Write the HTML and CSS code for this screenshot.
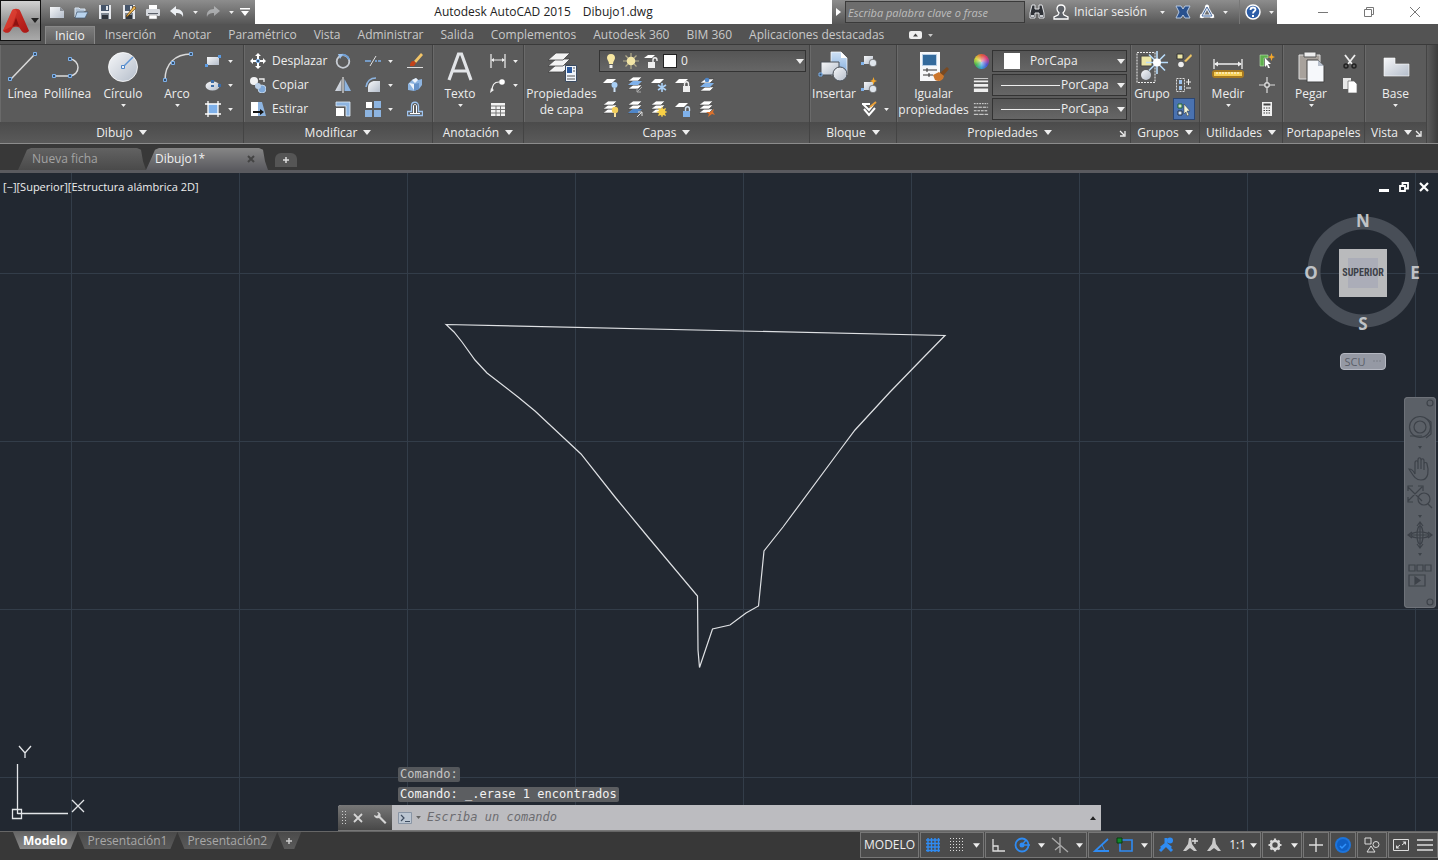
FILE: index.html
```html
<!DOCTYPE html>
<html lang="es">
<head>
<meta charset="utf-8">
<title>Autodesk AutoCAD 2015 - Dibujo1.dwg</title>
<link rel="stylesheet" href="styles.css">
</head>
<body>
<svg class="defs" aria-hidden="true">
  <defs>
    <linearGradient id="gMetal" x1="0" y1="0" x2="1" y2="1"><stop offset="0" stop-color="#f6f7f9"/><stop offset="1" stop-color="#b4bdca"/></linearGradient>
    <linearGradient id="gBlue" x1="0" y1="0" x2="0" y2="1"><stop offset="0" stop-color="#cfe2f6"/><stop offset="1" stop-color="#7ea9da"/></linearGradient>
    <linearGradient id="gRed" x1="0" y1="0" x2="1" y2="1"><stop offset="0" stop-color="#d9382c"/><stop offset="1" stop-color="#a81614"/></linearGradient>
  </defs>
  <symbol id="caret" viewBox="0 0 8 5"><path d="M0 0h8L4 5z" fill="currentColor"/></symbol>
  <symbol id="launch" viewBox="0 0 8 8"><path d="M2 2l4 4M7 2v5H2" stroke="#eee" stroke-width="1.300" fill="none"/></symbol>
  <symbol id="logo" viewBox="0 0 24 24"><path d="M0 21L8 3c1-3 7-3 8 0l8 18c-2 3-6 2-7 0l-2-3c-2-1-4-1-6 0l-2 3c-1 2-5 3-7 0z" fill="url(#gRed)"/><path d="M12 9l-3 8c2-1 4-1 6 0z" fill="#8d1211"/><path d="M8 3c1-3 4-2 5 1L8 17 0 21z" fill="#ee5341" opacity=".4"/></symbol>

  <symbol id="new" viewBox="0 0 16 16"><path d="M1 3h10l4 4v7H1z" fill="url(#gMetal)"/><path d="M11 3v4h4z" fill="#8b9098"/></symbol>
  <symbol id="open" viewBox="0 0 16 16"><path d="M2 13V4h4l1 1h5v2" fill="#aebfd2" stroke="#dbe6f1"/><path d="M4 8h11l-3 6H2z" fill="#b9d3ed" stroke="#42566d" stroke-width=".7"/></symbol>
  <symbol id="save" viewBox="0 0 16 16"><path d="M2 1h12v14H2z" fill="#e7e9ed"/><path d="M4 1h8v6H4z" fill="#46556a"/><path d="M9 2h2v4H9z" fill="#dfe4ea"/><path d="M4 9h8v6H4z" fill="#7f8893"/><path d="M5 11h6v4H5z" fill="#30353c"/></symbol>
  <symbol id="pencil" viewBox="0 0 16 16"><path d="M6 11l7-9 2 2-8 8-2 1z" fill="#eab34f" stroke="#6a4516" stroke-width=".7"/></symbol>
  <symbol id="print" viewBox="0 0 16 16"><path d="M4 1h8v5H4z" fill="#fff"/><rect x="1" y="5" width="14" height="7" rx="1" fill="#d6d9de"/><path d="M3 9h10v1H3z" fill="#5b6069"/><path d="M4 11h8v4H4z" fill="#fff" stroke="#777" stroke-width=".5"/></symbol>
  <symbol id="undo" viewBox="0 0 16 16"><path d="M1 7l6-5v3c5 0 8 3 7 8-1-3-3-4-7-4v3z" fill="#eceff3"/></symbol>
  <symbol id="bar-caret" viewBox="0 0 10 8"><path d="M0 0h10v1.500H0zM1 3h8L5 8z" fill="#fff"/></symbol>
  <symbol id="binoc" viewBox="0 0 16 16"><path d="M3 1h3v4h4V1h3l2 8v5h-5V9H6v5H1V9z" fill="#2e3136" stroke="#e3e5e8"/><path d="M2 11h3v2H2zM11 11h3v2h-3z" fill="#c9ccd0"/></symbol>
  <symbol id="user" viewBox="0 0 16 16"><path d="M8 1c3 0 4 2 4 4s-1 3-2 4l1 2 4 2v2H1v-2l4-2 1-2C5 8 4 7 4 5s1-4 4-4z" fill="#5d6167" stroke="#fff" stroke-width="1.300"/></symbol>
  <symbol id="xchg" viewBox="0 0 16 16"><path d="M1 2h5l2 3 2-3h5l-3 6 3 6h-5l-2-3-2 3H1l3-6z" fill="#29518e" stroke="#b5c7df"/></symbol>
  <symbol id="a360" viewBox="0 0 16 16"><path d="M8 3l5 9H3z" fill="none" stroke="#e1e8f1" stroke-width="3"/><circle cx="8" cy="3" r="2.200" fill="#fff"/><circle cx="3" cy="12" r="2.200" fill="#fff"/><circle cx="13" cy="12" r="2.200" fill="#fff"/><path d="M8 3l5 9H3z" fill="none" stroke="#4b6ca0"/></symbol>
  <symbol id="help" viewBox="0 0 16 16"><circle cx="8" cy="8" r="7" fill="#2d5ea8" stroke="#fff" stroke-width="1.500"/><path d="M5.500 6c0-3.500 5-3 5-.5 0 2-2.500 1.500-2.500 4" fill="none" stroke="#fff" stroke-width="1.800"/><path d="M7 11h2v2H7z" fill="#fff"/></symbol>

  <symbol id="line" viewBox="0 0 32 32"><path d="M4 28L28 3" stroke="#dadada" stroke-width="1.500"/><g fill="#33506f" stroke="#7fb1ea"><path d="M1.500 26.500h3v3h-3zM26.500 1.500h3v3h-3z"/></g></symbol>
  <symbol id="pline" viewBox="0 0 32 32"><path d="M2 25h15c12 0 12-17 0-17" fill="none" stroke="#dadada" stroke-width="1.500"/><g fill="#33506f" stroke="#7fb1ea"><path d="M.5 23.500h3v3h-3zM16.500 23.500h3v3h-3zM16.500 6.500h3v3h-3z"/></g></symbol>
  <symbol id="circle" viewBox="0 0 32 32"><circle cx="16" cy="16" r="14.500" fill="url(#gMetal)" stroke="#fff" stroke-width=".8"/><path d="M17 15L26 6" stroke="#5d93d3" stroke-width="1.500"/><path d="M14.500 14.500h3v3h-3z" fill="#eaf2fa" stroke="#4f86c8"/></symbol>
  <symbol id="arc" viewBox="0 0 32 32"><path d="M4 29C4 13 14 3 30 3" fill="none" stroke="#dadada" stroke-width="1.500"/><g fill="#33506f" stroke="#7fb1ea"><path d="M2.500 27.500h3v3h-3zM10.500 10.500h3v3h-3zM28.500 1.500h3v3h-3z"/></g></symbol>
  <symbol id="rect" viewBox="0 0 16 16"><path d="M2 4h12v8H2z" fill="url(#gMetal)"/><path d="M13 2h3v3h-3zM0 11h3v3H0z" fill="#5b9be3"/></symbol>
  <symbol id="ellipse" viewBox="0 0 16 16"><ellipse cx="7.500" cy="9" rx="7" ry="4.500" fill="url(#gMetal)"/><path d="M6 3h3v3H6zM6 8h3v2H6zM13 7h3v3h-3z" fill="#3c6da8"/></symbol>
  <symbol id="hatch" viewBox="0 0 16 16"><path d="M3 3h10v10H3z" fill="#7fb1ea"/><path d="M3 0v16M13 0v16M0 3h16M0 13h16" stroke="#fff" stroke-width="1.300"/></symbol>

  <symbol id="move" viewBox="0 0 16 16"><path d="M8 0l3 3H9v3H7V3H5zM8 16l3-3H9v-3H7v3H5zM0 8l3-3v2h3v2H3v2zM16 8l-3-3v2h-3v2h3v2z" fill="#fff"/><path d="M6.500 6.500h3v3h-3z" fill="#33506f" stroke="#8fbdf0"/></symbol>
  <symbol id="copy" viewBox="0 0 16 16"><circle cx="4" cy="4" r="4" fill="#f1f2f4"/><circle cx="12" cy="12" r="4" fill="#7fa9da" stroke="#dce9f7" stroke-width=".7"/><circle cx="8" cy="9" r="3" fill="#b9cee6"/><path d="M9 2h5v3" fill="none" stroke="#eee" stroke-width="1.300"/></symbol>
  <symbol id="stretch" viewBox="0 0 16 16"><path d="M1 1h8v14H1z" fill="#fff"/><path d="M8 1h4l4 14H8z" fill="#8db4e0"/><path d="M3 10h7V8l4 3-4 3v-2H3z" fill="#151515"/></symbol>
  <symbol id="rotate" viewBox="0 0 16 16"><circle cx="8" cy="8.500" r="6.300" fill="none" stroke="#c7ccd3" stroke-width="1.800"/><path d="M5 2.500a6.500 6.500 0 0 1 9 4" fill="none" stroke="#6f9fd6" stroke-width="2"/><path d="M3 1l5 0-3 5z" fill="#9ec3ee"/></symbol>
  <symbol id="mirror" viewBox="0 0 16 16"><path d="M6.500 2v12H0z" fill="url(#gMetal)"/><path d="M9.500 2v12H16z" fill="#8db4e0"/><path d="M8 0v16" stroke="#fff"/></symbol>
  <symbol id="scale" viewBox="0 0 16 16"><path d="M1 1h14v14h-4V5H1z" fill="#8db4e0" stroke="#e2edf9" stroke-width=".8"/><path d="M1 7h8v8H1z" fill="#fff"/></symbol>
  <symbol id="trim" viewBox="0 0 16 16"><path d="M0 8h6M10 8h2M13 8h3" stroke="#7fb1ea" stroke-width="1.500"/><path d="M5 13L11 3" stroke="#e2e2e2"/></symbol>
  <symbol id="fillet" viewBox="0 0 16 16"><path d="M3 15V11C3 6 6 4 10 4h5v11z" fill="url(#gMetal)"/><path d="M1 10C2 4 5 1 11 1" fill="none" stroke="#8db4e0" stroke-width="1.500"/></symbol>
  <symbol id="array" viewBox="0 0 16 16"><path d="M1 1h6v6H1z" fill="#fff"/><path d="M9 0h7v7H9zM0 9h7v7H0zM9 9h7v7H9z" fill="#8db4e0"/></symbol>
  <symbol id="erase" viewBox="0 0 16 16"><path d="M0 14.500h16" stroke="#ddd"/><path d="M7 8l7-8 2 2-7 8z" fill="#f3c568"/><path d="M7 8l2 2-2 3H3c0-3 1-5 4-5z" fill="#c2431a"/></symbol>
  <symbol id="explode" viewBox="0 0 16 16"><path d="M5 3l4-2 2 2 4-1v6l-3 4-5 2-6-1V7z" fill="#8db4e0"/><path d="M5 3l4-2 2 2-3 3zM2 6l5 1v6" fill="#eef4fb"/><path d="M7 7l5-1v6l-5 2z" fill="#6692c8"/></symbol>
  <symbol id="offset" viewBox="0 0 16 16"><path d="M.5 14.500h15v-4h-4V5c0-5-7-5-7 0v5.500h-4z" fill="none" stroke="#9ec3ee" stroke-width="1.300"/><path d="M3 12.500h10M6.500 12V5c0-2 3-2 3 0v7" fill="none" stroke="#fff"/></symbol>

  <symbol id="text-a" viewBox="0 0 32 32"><path d="M5 29L14.500 3h3L27 29M8 20h16" fill="none" stroke="#e2e4e7" stroke-width="3.200"/></symbol>
  <symbol id="dim" viewBox="0 0 16 16"><path d="M1 1v14M15 1v14M2 7h12" stroke="#eee" stroke-width="1.200" fill="none"/><path d="M1 7l3-2v4zM15 7l-3-2v4z" fill="#eee"/></symbol>
  <symbol id="leader" viewBox="0 0 16 16"><path d="M2 14c0-6 2-9 7-9" fill="none" stroke="#eee" stroke-width="1.200"/><path d="M0 16l1-5 3 2z" fill="#eee"/><circle cx="12" cy="5" r="2.800" fill="#fff"/></symbol>
  <symbol id="table" viewBox="0 0 16 16"><path d="M1 2h14v13H1z" fill="#f2f2f2"/><path d="M1 5h14M1 8.500h14M1 12h14M6 5v10M10.500 5v10" stroke="#777"/></symbol>

  <symbol id="stack" viewBox="0 0 16 16"><g fill="#fff" stroke="#444" stroke-width=".6"><path d="M1 14l5-4h9l-4 4z"/><path d="M1 10l5-4h9l-4 4z"/><path d="M1 6l5-4h9l-4 4z"/></g></symbol>
  <symbol id="sheet" viewBox="0 0 16 16"><path d="M0 6l4-4h9L9 6z" fill="#fff"/></symbol>
  <symbol id="layerprops" viewBox="0 0 32 32"><g fill="#f4f4f4" stroke="#444" stroke-width=".8"><path d="M2 21l8-7h14l-7 7z"/><path d="M2 15l8-7h14l-7 7z"/><path d="M2 9l8-7h14l-7 7z"/></g><path d="M19.500 14.500h11v16h-11z" fill="#f0f5fb" stroke="#3a4a60"/><path d="M21 16h5v6h-5z" fill="#2c5a9e"/><path d="M27 17h2M27 20h2M21 25h8M21 28h8" stroke="#555"/></symbol>
  <symbol id="l-off" viewBox="0 0 16 16"><use href="#sheet"/><circle cx="11.500" cy="8" r="3" fill="#a9cff5"/><path d="M11.500 11v4" stroke="#cfe2f6" stroke-width="2"/></symbol>
  <symbol id="l-on" viewBox="0 0 16 16"><use href="#stack" width="16" height="16" x="-1" y="-2"/><circle cx="12" cy="9" r="3.200" fill="#f4cf5b"/><path d="M12 12v4" stroke="#f7e09a" stroke-width="2"/></symbol>
  <symbol id="l-iso" viewBox="0 0 16 16"><use href="#stack" width="16" height="16" y="-2"/><path d="M1 8l5-4h9l-4 4z" fill="#7fb1ea"/><path d="M15 10l-5 5M10 11v4h4" stroke="#aaa" fill="none"/></symbol>
  <symbol id="l-uniso" viewBox="0 0 16 16"><use href="#stack" width="16" height="16" y="-2"/><path d="M1 12l5-4h9l-4 4z" fill="#4f86c8"/><path d="M10 16l5-5M11 11h4v4" stroke="#ddd" fill="none"/></symbol>
  <symbol id="l-frz" viewBox="0 0 16 16"><use href="#sheet"/><path d="M11 6v9M7 8l8 5M15 8l-8 5" stroke="#a9cff5" stroke-width="1.600"/></symbol>
  <symbol id="l-thaw" viewBox="0 0 16 16"><use href="#stack" width="16" height="16" x="-1" y="-2"/><path d="M11 5l1 3 3-1-1 3 3 1-3 1 1 3-3-1-1 3-1-3-3 1 1-3-3-1 3-1-1-3 3 1z" fill="#f8cf45"/></symbol>
  <symbol id="l-lock" viewBox="0 0 16 16"><use href="#sheet"/><path d="M8 9h7v6H8z" fill="#eee"/><path d="M9.500 9V7c0-3 4-3 4 0v2" fill="none" stroke="#eee" stroke-width="1.400"/></symbol>
  <symbol id="l-unlock" viewBox="0 0 16 16"><use href="#sheet"/><path d="M8 10h7v6H8z" fill="#7fb1ea"/><path d="M10.500 10V8c0-3 4-3 4 0v2" fill="none" stroke="#cde" stroke-width="1.400"/></symbol>
  <symbol id="l-cur" viewBox="0 0 16 16"><use href="#stack" width="16" height="16"/><path d="M1 10l5-4h9l-4 4z" fill="#7fb1ea"/><circle cx="8" cy="3" r="2.300" fill="#4f86c8"/></symbol>
  <symbol id="l-del" viewBox="0 0 16 16"><use href="#stack" width="16" height="16" x="-1" y="-2"/><path d="M15 8l-4 3-4 0 3 2-1 3 4-3 3 1-2-3z" fill="#d9712d"/></symbol>
  <symbol id="bulb" viewBox="0 0 16 16"><path d="M8 1c3 0 4 2 4 4s-2 3-2 6H6c0-3-2-4-2-6s1-4 4-4z" fill="#f7e7a1"/><path d="M6.500 12h3v3h-3z" fill="#eee"/></symbol>
  <symbol id="sun" viewBox="0 0 16 16"><path d="M8 0v16M0 8h16M2.500 2.500l11 11M13.500 2.500l-11 11" stroke="#b4ad8b" stroke-width="1.200"/><circle cx="8" cy="8" r="4.300" fill="#f3e6a6"/></symbol>
  <symbol id="freelock" viewBox="0 0 16 16"><path d="M1 5l4-3h7L9 5z" fill="#fff"/><path d="M5 9h7v6H5z" fill="#eee"/><path d="M10 9V7c0-3 4-3 4 0v1" fill="none" stroke="#eee" stroke-width="1.400"/></symbol>

  <symbol id="insert" viewBox="0 0 32 32"><path d="M13 1h10l6 6v17H13z" fill="url(#gBlue)" stroke="#fff" stroke-width=".7"/><path d="M23 1v6h6" fill="#fff"/><path d="M3 11h18v13H3z" fill="url(#gMetal)" stroke="#4a5058"/><circle cx="22" cy="23" r="7" fill="url(#gMetal)" stroke="#4a5058"/><path d="M1 22h3v3H1z" fill="#33506f" stroke="#7fb1ea"/></symbol>
  <symbol id="mkblock" viewBox="0 0 16 16"><path d="M3 2h9v8H3z" fill="url(#gMetal)"/><circle cx="12" cy="9" r="3.800" fill="#dfe5ec" stroke="#555" stroke-width=".7"/><path d="M0 8h3v3H0z" fill="#7fb1ea"/></symbol>
  <symbol id="star" viewBox="0 0 16 16"><path d="M12.500 0l1 3 2.500 1-2.500 1-1 3-1-3L9 4l2.500-1z" fill="#f6a82a"/></symbol>
  <symbol id="attr" viewBox="0 0 16 16"><path d="M1 3h8M2 3l6 6 4-5M3 8l5 6 6-7" fill="none" stroke="#fff" stroke-width="2"/><path d="M9 6l6-5" stroke="#eaa13a" stroke-width="2"/></symbol>

  <symbol id="match" viewBox="0 0 32 32"><path d="M2 1h20v29H2z" fill="#f6f8fa"/><path d="M4.500 3.500h14v11h-14z" fill="#336a9c" stroke="#b8cfe6"/><path d="M5 19h14M5 24h10M9 17v4M11 22v4" stroke="#333"/><path d="M22 22l7-6 2 2-6 7z" fill="#7a4920"/><path d="M15 24l6-3 5 4c-1 5-5 6-9 4z" fill="#cb762c"/></symbol>
  <symbol id="lweight" viewBox="0 0 18 16"><path d="M1 0h16v1H1zM1 3h16v2H1zM1 7h16v3H1zM1 12h16v4H1z" fill="#eee"/></symbol>
  <symbol id="ltype" viewBox="0 0 18 16"><path d="M1 2h16" stroke="#eee" stroke-dasharray="2 1"/><path d="M1 6h16" stroke="#eee" stroke-dasharray="4 1"/><path d="M1 10h16" stroke="#eee" stroke-dasharray="3 1"/><path d="M1 14h16" stroke="#eee" stroke-dasharray="5 1"/></symbol>

  <symbol id="group" viewBox="0 0 32 32"><path d="M1 1.500h18v30H1z" fill="none" stroke="#eee" stroke-dasharray="2 1"/><path d="M5 5h11v10H5z" fill="#ece6a6" stroke="#444"/><circle cx="10" cy="24" r="5" fill="url(#gMetal)"/><path d="M21 0v23M10 11.500h22M13 3.500l16 16M29 3.500l-16 16" stroke="#b9dcfb" stroke-width="1.600"/><circle cx="21" cy="11.500" r="4" fill="#fff"/></symbol>
  <symbol id="gedit" viewBox="0 0 16 16"><path d="M1 1h6v5H1z" fill="#ece6a6" stroke="#333"/><circle cx="5" cy="11.500" r="2.800" fill="#eee"/><path d="M8 8l7-7 1 2-6 6z" fill="#eec565"/></symbol>
  <symbol id="gadd" viewBox="0 0 16 16"><path d="M.5 1.500h8v13h-8z" fill="none" stroke="#ddd" stroke-dasharray="2 1"/><path d="M3 3h3v4H3zM3 9h3v4H3z" fill="#9ec3ee"/><path d="M10 5h5M12.500 2v6M10 11h5" stroke="#eee"/></symbol>
  <symbol id="gsel" viewBox="0 0 16 16"><path d="M2 3h4v4H2z" fill="#cfe3c4" stroke="#263"/><path d="M2 10h4v4H2z" fill="#dce8f6" stroke="#234"/><path d="M8 3l6 7-3 0 2 4-2 1-1-4-2 2z" fill="#f2f5da" stroke="#333" stroke-width=".5"/></symbol>
  <symbol id="measure" viewBox="0 0 32 32"><path d="M2 8v10M30 8v10M3 13h26" stroke="#eee" stroke-width="1.300"/><path d="M2 13l4-2.500v5zM30 13l-4-2.500v5z" fill="#eee"/><rect x="0" y="19" width="32" height="8" rx="3" fill="#a87a22"/><path d="M2 21h28v4H2z" fill="#f7cf55"/><path d="M5 21v2M8 21v2M11 21v2M14 21v2M17 21v2M20 21v2M23 21v2M26 21v2" stroke="#fff"/></symbol>
  <symbol id="qsel" viewBox="0 0 16 16"><path d="M1 2h8v3H5v8H1z" fill="#5eae4d" stroke="#bfe4b5" stroke-width=".6"/><path d="M6 5l6 6H9l2 4-2 0-1-3-2 2z" fill="#fff"/><path d="M12.500 0l1 3 2.500 1-2.500 1-1 3-1-3L9 4l2.500-1z" fill="#f6a82a"/></symbol>
  <symbol id="point" viewBox="0 0 16 16"><path d="M8 0v16M0 8h16" stroke="#ddd" stroke-width="1.200"/><path d="M6 6h4v4H6z" fill="#555" stroke="#fff"/></symbol>
  <symbol id="calc" viewBox="0 0 16 16"><path d="M3 1h10v14H3z" fill="#f0f0f0"/><path d="M4.500 2.500h7v2h-7z" fill="#444"/><path d="M4.500 7h7M4.500 9.500h7M4.500 12h7" stroke="#444" stroke-dasharray="1.500 1"/></symbol>
  <symbol id="paste" viewBox="0 0 32 32"><path d="M4 4h21v24H4z" fill="#a8a29c" stroke="#ddd"/><path d="M9 1h12v5H9z" fill="#eee" stroke="#555"/><path d="M12 9h11l6 6v16H12z" fill="#f6f8fb" stroke="#444"/><path d="M23 9v6h6z" fill="#b8c0cc"/></symbol>
  <symbol id="cut" viewBox="0 0 16 16"><path d="M3 2l7 9M13 2l-7 9" stroke="#eee" stroke-width="1.800"/><circle cx="4" cy="13" r="2" fill="none" stroke="#222" stroke-width="1.500"/><circle cx="12" cy="13" r="2" fill="none" stroke="#222" stroke-width="1.500"/></symbol>
  <symbol id="dup" viewBox="0 0 16 16"><path d="M1 1h8v11H1z" fill="#e8e8e8"/><path d="M6 4h6l3 3v9H6z" fill="#fff" stroke="#666" stroke-width=".7"/></symbol>
  <symbol id="base" viewBox="0 0 32 32"><path d="M4 7h11v6h14v12H4z" fill="url(#gMetal)" stroke="#fff" stroke-width=".6"/></symbol>
</svg>

<div class="app">
  <header class="top">
    <button class="logo" aria-label="Menú de la aplicación"><svg class="logo-mark"><use href="#logo"/></svg><svg class="caret dark"><use href="#caret"/></svg></button>
    <div class="titlebar">
      <div class="quick">
        <button aria-label="Nuevo"><svg class="ic"><use href="#new"/></svg></button>
        <button aria-label="Abrir"><svg class="ic"><use href="#open"/></svg></button>
        <button aria-label="Guardar"><svg class="ic"><use href="#save"/></svg></button>
        <button aria-label="Guardar como"><svg class="ic"><use href="#save"/><use href="#pencil"/></svg></button>
        <button aria-label="Imprimir"><svg class="ic"><use href="#print"/></svg></button>
        <button aria-label="Deshacer"><svg class="ic"><use href="#undo"/></svg></button>
        <button class="drop" aria-label="Más"><svg class="caret tiny"><use href="#caret"/></svg></button>
        <button class="dim" aria-label="Rehacer"><svg class="ic flip"><use href="#undo"/></svg></button>
        <button class="drop" aria-label="Más"><svg class="caret tiny"><use href="#caret"/></svg></button>
        <button class="drop last" aria-label="Personalizar"><svg class="bar-caret"><use href="#bar-caret"/></svg></button>
      </div>
      <h1 class="title"><span>Autodesk AutoCAD 2015</span><span>Dibujo1.dwg</span></h1>
      <div class="info">
        <button class="info-toggle" aria-label="Contraer"><svg class="play" viewBox="0 0 5 8"><path d="M0 0l5 4-5 4z" fill="#fff"/></svg></button>
        <input class="search" type="text" aria-label="Buscar" placeholder="Escriba palabra clave o frase">
        <button aria-label="Buscar"><svg class="ic"><use href="#binoc"/></svg></button>
        <button class="signin"><svg class="ic"><use href="#user"/></svg>Iniciar sesión<svg class="caret tiny"><use href="#caret"/></svg></button>
        <button aria-label="Exchange"><svg class="ic"><use href="#xchg"/></svg></button>
        <button aria-label="A360"><svg class="ic"><use href="#a360"/></svg></button>
        <button class="drop" aria-label="Más"><svg class="caret tiny"><use href="#caret"/></svg></button>
        <button class="help" aria-label="Ayuda"><svg class="ic"><use href="#help"/></svg></button>
        <button class="drop" aria-label="Más"><svg class="caret tiny"><use href="#caret"/></svg></button>
      </div>
      <div class="window">
        <button aria-label="Minimizar"><svg class="win" viewBox="0 0 12 12"><path d="M1 6.500h10"/></svg></button>
        <button aria-label="Restaurar"><svg class="win" viewBox="0 0 12 12"><path d="M1.500 3.500h7v7h-7zM3.500 3.500v-2h7v7h-2"/></svg></button>
        <button aria-label="Cerrar"><svg class="win" viewBox="0 0 12 12"><path d="M1 1l10 10M11 1L1 11"/></svg></button>
      </div>
    </div>
    <nav class="menu">
      <button class="on">Inicio</button><button>Inserción</button><button>Anotar</button><button>Paramétrico</button><button>Vista</button><button>Administrar</button><button>Salida</button><button>Complementos</button><button>Autodesk 360</button><button>BIM 360</button><button>Aplicaciones destacadas</button>
      <button class="minim" aria-label="Minimizar cinta"><svg class="pill" viewBox="0 0 13 8"><rect width="13" height="8" rx="2" fill="#eee"/><path d="M4 5.500h5L6.500 2.500z" fill="#444"/></svg><svg class="caret tiny"><use href="#caret"/></svg></button>
    </nav>
  </header>

  <section class="ribbon" aria-label="Cinta de opciones">
    <section class="panel">
      <div class="body">
        <button class="big w45"><svg class="bi"><use href="#line"/></svg>Línea</button>
        <button class="big w45"><svg class="bi"><use href="#pline"/></svg>Polilínea</button>
        <button class="big w66"><svg class="bi"><use href="#circle"/></svg>Círculo<svg class="caret tiny"><use href="#caret"/></svg></button>
        <button class="big w42"><svg class="bi"><use href="#arc"/></svg>Arco<svg class="caret tiny"><use href="#caret"/></svg></button>
        <div class="tools gap-s">
          <div class="tool"><button aria-label="Rectángulo"><svg class="ic"><use href="#rect"/></svg></button><button class="drop" aria-label="Más"><svg class="caret tiny"><use href="#caret"/></svg></button></div>
          <div class="tool"><button aria-label="Elipse"><svg class="ic"><use href="#ellipse"/></svg></button><button class="drop" aria-label="Más"><svg class="caret tiny"><use href="#caret"/></svg></button></div>
          <div class="tool"><button aria-label="Sombreado"><svg class="ic"><use href="#hatch"/></svg></button><button class="drop" aria-label="Más"><svg class="caret tiny"><use href="#caret"/></svg></button></div>
        </div>
      </div>
      <button class="name"><span>Dibujo<svg class="caret"><use href="#caret"/></svg></span></button>
    </section>

    <section class="panel">
      <div class="body">
        <div class="tools named">
          <button><svg class="ic"><use href="#move"/></svg>Desplazar</button>
          <button><svg class="ic"><use href="#copy"/></svg>Copiar</button>
          <button><svg class="ic"><use href="#stretch"/></svg>Estirar</button>
        </div>
        <div class="tools">
          <div class="tool"><button aria-label="Girar"><svg class="ic"><use href="#rotate"/></svg></button></div>
          <div class="tool"><button aria-label="Simetría"><svg class="ic"><use href="#mirror"/></svg></button></div>
          <div class="tool"><button aria-label="Escala"><svg class="ic"><use href="#scale"/></svg></button></div>
        </div>
        <div class="tools gap-m">
          <div class="tool"><button aria-label="Recortar"><svg class="ic"><use href="#trim"/></svg></button><button class="drop" aria-label="Más"><svg class="caret tiny"><use href="#caret"/></svg></button></div>
          <div class="tool"><button aria-label="Empalme"><svg class="ic"><use href="#fillet"/></svg></button><button class="drop" aria-label="Más"><svg class="caret tiny"><use href="#caret"/></svg></button></div>
          <div class="tool"><button aria-label="Matriz"><svg class="ic"><use href="#array"/></svg></button><button class="drop" aria-label="Más"><svg class="caret tiny"><use href="#caret"/></svg></button></div>
        </div>
        <div class="tools gap-m">
          <div class="tool"><button aria-label="Borrar"><svg class="ic"><use href="#erase"/></svg></button></div>
          <div class="tool"><button aria-label="Descomponer"><svg class="ic"><use href="#explode"/></svg></button></div>
          <div class="tool"><button aria-label="Desfase"><svg class="ic"><use href="#offset"/></svg></button></div>
        </div>
      </div>
      <button class="name"><span>Modificar<svg class="caret"><use href="#caret"/></svg></span></button>
    </section>

    <section class="panel">
      <div class="body">
        <button class="big w54"><svg class="bi"><use href="#text-a"/></svg>Texto<svg class="caret tiny"><use href="#caret"/></svg></button>
        <div class="tools">
          <div class="tool"><button aria-label="Cota"><svg class="ic"><use href="#dim"/></svg></button><button class="drop" aria-label="Más"><svg class="caret tiny"><use href="#caret"/></svg></button></div>
          <div class="tool"><button aria-label="Directriz"><svg class="ic"><use href="#leader"/></svg></button><button class="drop" aria-label="Más"><svg class="caret tiny"><use href="#caret"/></svg></button></div>
          <div class="tool"><button aria-label="Tabla"><svg class="ic"><use href="#table"/></svg></button></div>
        </div>
      </div>
      <button class="name"><span>Anotación<svg class="caret"><use href="#caret"/></svg></span></button>
    </section>

    <section class="panel">
      <div class="body">
        <button class="big w75"><svg class="bi"><use href="#layerprops"/></svg>Propiedades<br>de capa</button>
        <div class="layers">
          <div class="tool">
            <label class="combo"><svg class="ic"><use href="#bulb"/></svg><svg class="ic"><use href="#sun"/></svg><svg class="ic"><use href="#freelock"/></svg><i class="chip small"></i><select aria-label="Capa"><option>0</option></select><svg class="caret"><use href="#caret"/></svg></label>
          </div>
          <div class="tool wide"><button aria-label="Desactivar"><svg class="ic"><use href="#l-off"/></svg></button><button aria-label="Aislar"><svg class="ic"><use href="#l-iso"/></svg></button><button aria-label="Inutilizar"><svg class="ic"><use href="#l-frz"/></svg></button><button aria-label="Bloquear"><svg class="ic"><use href="#l-lock"/></svg></button><button aria-label="Definir como actual"><svg class="ic"><use href="#l-cur"/></svg></button></div>
          <div class="tool wide"><button aria-label="Activar"><svg class="ic"><use href="#l-on"/></svg></button><button aria-label="Desaislar"><svg class="ic"><use href="#l-uniso"/></svg></button><button aria-label="Reutilizar"><svg class="ic"><use href="#l-thaw"/></svg></button><button aria-label="Desbloquear"><svg class="ic"><use href="#l-unlock"/></svg></button><button aria-label="Igualar capa"><svg class="ic"><use href="#l-del"/></svg></button></div>
        </div>
      </div>
      <button class="name"><span>Capas<svg class="caret"><use href="#caret"/></svg></span></button>
    </section>

    <section class="panel">
      <div class="body">
        <button class="big w48"><svg class="bi"><use href="#insert"/></svg>Insertar</button>
        <div class="tools">
          <div class="tool"><button aria-label="Crear bloque"><svg class="ic"><use href="#mkblock" y="1"/></svg></button></div>
          <div class="tool"><button aria-label="Editar bloque"><svg class="ic"><use href="#mkblock" y="3"/><use href="#star"/></svg></button></div>
          <div class="tool"><button aria-label="Editar atributos"><svg class="ic"><use href="#attr"/></svg></button><button class="drop" aria-label="Más"><svg class="caret tiny"><use href="#caret"/></svg></button></div>
        </div>
      </div>
      <button class="name"><span>Bloque<svg class="caret"><use href="#caret"/></svg></span></button>
    </section>

    <section class="panel">
      <div class="body">
        <button class="big w73"><svg class="bi"><use href="#match"/></svg>Igualar<br>propiedades</button>
        <div class="tools">
          <div class="tool"><button aria-label="Color"><i class="wheel"></i></button></div>
          <div class="tool"><button aria-label="Grosor"><svg class="ic"><use href="#lweight"/></svg></button></div>
          <div class="tool"><button aria-label="Tipo de línea"><svg class="ic"><use href="#ltype"/></svg></button></div>
        </div>
        <div class="props">
          <div class="tool"><label class="combo"><i class="chip"></i><select aria-label="Color de objeto"><option>PorCapa</option></select><svg class="caret"><use href="#caret"/></svg></label></div>
          <div class="tool"><label class="combo"><i class="rule"></i><select aria-label="Grosor de línea"><option>PorCapa</option></select><svg class="caret"><use href="#caret"/></svg></label></div>
          <div class="tool"><label class="combo"><i class="rule"></i><select aria-label="Tipo de línea"><option>PorCapa</option></select><svg class="caret"><use href="#caret"/></svg></label></div>
        </div>
      </div>
      <button class="name"><span>Propiedades<svg class="caret"><use href="#caret"/></svg></span><svg class="launch"><use href="#launch"/></svg></button>
    </section>

    <section class="panel">
      <div class="body">
        <button class="big w42"><svg class="bi"><use href="#group"/></svg>Grupo</button>
        <div class="tools">
          <div class="tool"><button aria-label="Editar grupo"><svg class="ic"><use href="#gedit"/></svg></button></div>
          <div class="tool"><button aria-label="Añadir o quitar"><svg class="ic"><use href="#gadd"/></svg></button></div>
          <div class="tool"><button class="pressed" aria-label="Selección de grupo"><svg class="ic"><use href="#gsel"/></svg></button></div>
        </div>
      </div>
      <button class="name"><span>Grupos<svg class="caret"><use href="#caret"/></svg></span></button>
    </section>

    <section class="panel">
      <div class="body">
        <button class="big w56"><svg class="bi"><use href="#measure"/></svg>Medir<svg class="caret tiny"><use href="#caret"/></svg></button>
        <div class="tools">
          <div class="tool"><button aria-label="Selección rápida"><svg class="ic"><use href="#qsel"/></svg></button></div>
          <div class="tool"><button aria-label="Punto"><svg class="ic"><use href="#point"/></svg></button></div>
          <div class="tool"><button aria-label="Calculadora"><svg class="ic"><use href="#calc"/></svg></button></div>
        </div>
      </div>
      <button class="name"><span>Utilidades<svg class="caret"><use href="#caret"/></svg></span></button>
    </section>

    <section class="panel">
      <div class="body">
        <button class="big w56"><svg class="bi"><use href="#paste"/></svg>Pegar<svg class="caret tiny"><use href="#caret"/></svg></button>
        <div class="tools">
          <div class="tool"><button aria-label="Cortar"><svg class="ic"><use href="#cut"/></svg></button></div>
          <div class="tool"><button aria-label="Copiar"><svg class="ic"><use href="#dup"/></svg></button></div>
        </div>
      </div>
      <button class="name"><span>Portapapeles</span></button>
    </section>

    <section class="panel">
      <div class="body">
        <button class="big grow"><svg class="bi"><use href="#base"/></svg>Base<svg class="caret tiny"><use href="#caret"/></svg></button>
      </div>
      <button class="name"><span>Vista<svg class="caret"><use href="#caret"/></svg></span><svg class="launch"><use href="#launch"/></svg></button>
    </section>
  </section>

  <nav class="files">
    <button class="file">Nueva ficha</button>
    <button class="file on">Dibujo1*<svg class="x" viewBox="0 0 8 8"><path d="M1 1l6 6M7 1L1 7" stroke="#444" stroke-width="2"/></svg></button>
    <button class="plus" aria-label="Nueva ficha"><svg viewBox="0 0 8 8"><path d="M4 1v6M1 4h6" stroke="#ddd" stroke-width="1.500"/></svg></button>
  </nav>

  <main class="canvas">
    <svg class="drawing" aria-label="Dibujo">
      <g transform="translate(0 -173)" fill="none" stroke="#dfe1e4" stroke-width="1.200">
        <path d="M446 324.500L945 335.500 921 360 890 392 855 430 840 450 783 527 764 551 758.500 606 746 613 730 625 712.500 629 699.500 667.500 698 650 697.500 596 648 537 615 497 581 454 535 411 518 397 487 373 475 360 462 342 454 332z"/>
      </g>
    </svg>
    <div class="view-row">
      <div class="view-label"><button>[−]</button><button>[Superior]</button><button>[Estructura alámbrica 2D]</button></div>
      <div class="doc-controls">
        <button aria-label="Minimizar vista"><svg viewBox="0 0 10 10"><path d="M0 7h10v3H0z" fill="#fff"/></svg></button>
        <button aria-label="Restaurar vista"><svg viewBox="0 0 10 10"><path d="M1 4h5v5H1zM3.500 3.500V1H9v5.500H6.500" fill="none" stroke="#fff" stroke-width="1.800"/></svg></button>
        <button aria-label="Cerrar vista"><svg viewBox="0 0 10 10"><path d="M1 1l8 8M9 1L1 9" stroke="#fff" stroke-width="2.200"/></svg></button>
      </div>
    </div>
    <div class="viewcube">
      <div class="ring"><span class="n">N</span><span class="w">O</span><button class="cube">SUPERIOR</button><span class="e">E</span><span class="s">S</span></div>
      <button class="scu">SCU<svg viewBox="0 0 8 4"><path d="M0 1h2M3 1h2M6 1h2" stroke="#7d8089"/></svg></button>
    </div>
    <div class="navbar">
      <svg viewBox="0 0 32 211" fill="none" stroke="#3d4249" stroke-width="1.200">
        <circle cx="26" cy="6" r="3"/><circle cx="26" cy="205" r="3"/>
        <circle cx="16" cy="30" r="10.500"/><circle cx="16" cy="30" r="6"/><path d="M6 39h12M23 22l4 3v12l-5 4"/>
        <path d="M14 49h4l-2 3zM14 118h4l-2 3zM14 156h4l-2 3z" fill="#3d4249" stroke="none"/>
        <path d="M5 72c4 0 5 3 6 5V66c0-3 3-3 3 0v6-9c0-3 3-3 3 0v9-8c0-3 3-3 3 0v9-6c0-2 3-2 3 0 2 6 2 16-6 16-6 0-8-5-12-11z"/>
        <path d="M4 90l14 14M18 90L4 104M4 94v-5h5M14 89h5v5M4 100v5h5"/><circle cx="20" cy="102" r="6"/><path d="M24 107l4 4"/>
        <path d="M16 126v24M13 129l3-4 3 4M13 147l3 4 3-4M5 138h22M8 135l-4 3 4 3M24 135l4 3-4 3"/><ellipse cx="16" cy="138" rx="9" ry="3"/><ellipse cx="16" cy="138" rx="3" ry="9"/>
        <path d="M5 168h6v6H5zM13 168h6v6h-6zM21 168h6v6h-6zM5 178h16v11H5z"/><path d="M11 180l5 3.500-5 3.500z" fill="#3d4249"/>
      </svg>
    </div>
    <svg class="ucs" viewBox="0 0 90 80" fill="none" stroke="#e3e5e8" stroke-width="1.300"><path d="M7.500 21v50M12 70.500h46M2.500 66.500h9v9h-9zM7.500 70.500h4M9 3l6 7 6-7M15 10v5M62 57l12 12M74 57L62 69"/></svg>
    <div class="command">
      <p class="old">Comando:</p>
      <p>Comando: _.erase 1 encontrados</p>
      <div class="cmd">
        <div class="cmd-tools"><i class="grip"></i>
          <button aria-label="Cerrar línea de comandos"><svg viewBox="0 0 10 10"><path d="M1 1l8 8M9 1L1 9" stroke="#d5d5d5" stroke-width="1.800"/></svg></button>
          <button aria-label="Personalizar"><svg class="wrench" viewBox="0 0 14 14"><path d="M1 4a3.500 3.500 0 0 0 5 3l6 6 1.500-1.500-6-6A3.500 3.500 0 0 0 4 1l1.500 2L4 5z" fill="#d5d5d5"/></svg></button>
        </div>
        <button class="prompt" aria-label="Comandos recientes"><svg class="term" viewBox="0 0 14 12"><path d="M.5.5h13v11H.5z" fill="#bcc6d2" stroke="#8995a5"/><path d="M3 3l3 3-3 3M7 9.500h5" fill="none" stroke="#3f4d60" stroke-width="1.200"/></svg><svg class="caret tiny"><use href="#caret"/></svg></button>
        <input type="text" aria-label="Línea de comando" placeholder="Escriba un comando">
        <button class="up" aria-label="Historial"><svg class="caret turn"><use href="#caret"/></svg></button>
      </div>
    </div>
  </main>

  <footer class="bottom">
    <nav class="layouts">
      <button class="on">Modelo</button><button>Presentación1</button><button>Presentación2</button>
      <button class="add" aria-label="Nueva presentación"><svg viewBox="0 0 8 8"><path d="M4 1v6M1 4h6" stroke="#ccc" stroke-width="1.500"/></svg></button>
    </nav>
    <div class="status">
      <div class="set"><button class="mode">MODELO</button></div>
      <div class="set">
        <button aria-label="Rejilla"><svg class="ic" viewBox="0 0 16 16"><path d="M3 1v14M6.500 1v14M10 1v14M13.500 1v14M1 3h14M1 6.500h14M1 10h14M1 13.500h14" stroke="#2f8bf2" stroke-width="1.400"/></svg></button>
        <button aria-label="Forzar cursor"><svg class="ic" viewBox="0 0 16 16"><path d="M1 1.500h15M1 4.500h15M1 7.500h15M1 10.500h15M1 13.500h15" stroke="#ddd" stroke-dasharray="1 2"/></svg></button>
        <button class="drop" aria-label="Más"><svg class="caret"><use href="#caret"/></svg></button>
      </div>
      <div class="set">
        <button aria-label="Orto"><svg class="ic" viewBox="0 0 16 16"><path d="M3 2v12h12M3 9h5v5" fill="none" stroke="#ddd" stroke-width="1.300"/></svg></button>
        <button aria-label="Polar"><svg class="ic" viewBox="0 0 16 16"><circle cx="8" cy="8" r="6.500" fill="none" stroke="#2f8bf2" stroke-width="1.800"/><path d="M8 8h8M8 8l4-5" stroke="#2f8bf2" stroke-width="1.500"/><circle cx="8" cy="8" r="2.500" fill="#2f8bf2"/></svg></button>
        <button class="drop" aria-label="Más"><svg class="caret"><use href="#caret"/></svg></button>
        <button aria-label="Isométrico"><svg class="ic" viewBox="0 0 16 16"><path d="M0 1l16 14M8 0v16M3 13l6-5" stroke="#aaa" stroke-width="1.300"/></svg></button>
        <button class="drop" aria-label="Más"><svg class="caret"><use href="#caret"/></svg></button>
      </div>
      <div class="set">
        <button aria-label="Rastreo"><svg class="ic" viewBox="0 0 16 16"><path d="M15 2L2 14h14" fill="none" stroke="#2f8bf2" stroke-width="1.800"/><path d="M9 8l3 6" stroke="#2f8bf2"/></svg></button>
        <button aria-label="Referencia a objetos"><svg class="ic" viewBox="0 0 16 16"><path d="M3 3h12v11H3z" fill="none" stroke="#2f8bf2" stroke-width="1.600"/><path d="M0 1h5v5H0z" fill="#128a2a" stroke="#073d11"/></svg></button>
        <button class="drop" aria-label="Más"><svg class="caret"><use href="#caret"/></svg></button>
      </div>
      <div class="set">
        <button aria-label="Visibilidad de anotación"><svg class="ic" viewBox="0 0 16 16"><path d="M8 1v7L2 14M8 8l6 6M3 11l5-4 5 4" fill="none" stroke="#2f8bf2" stroke-width="3"/><circle cx="12" cy="3.500" r="3" fill="#2f8bf2"/></svg></button>
        <button aria-label="Añadir escalas"><svg class="ic" viewBox="0 0 16 16"><path d="M7 1h2l1 6 5 7h-3l-4-3-4 3H1l5-7z" fill="#c9c9c9"/><path d="M13 1v6M10 4h6" stroke="#ddd" stroke-width="1.300"/></svg></button>
        <button aria-label="Escala de anotación"><svg class="ic" viewBox="0 0 16 16"><path d="M7 1h2l1 6 5 7h-3l-4-3-4 3H1l5-7z" fill="#c9c9c9"/></svg></button>
        <button class="ratio">1:1<svg class="caret"><use href="#caret"/></svg></button>
      </div>
      <div class="set"><button aria-label="Espacio de trabajo"><svg class="ic" viewBox="0 0 16 16"><circle cx="8" cy="8" r="4" fill="none" stroke="#d8d8d8" stroke-width="2.600"/><path d="M8 1.500v2.500M8 12v2.500M1.500 8H4M12 8h2.500M3.500 3.500l2 2M10.500 10.500l2 2M12.500 3.500l-2 2M5.500 10.500l-2 2" stroke="#d8d8d8" stroke-width="2.200"/></svg></button><button class="drop" aria-label="Más"><svg class="caret"><use href="#caret"/></svg></button></div>
      <div class="set"><button aria-label="Monitor de anotación"><svg class="ic" viewBox="0 0 16 16"><path d="M8 1v14M1 8h14" stroke="#ddd" stroke-width="1.400"/></svg></button></div>
      <div class="set"><button aria-label="Aceleración de hardware"><svg class="ic" viewBox="0 0 16 16"><circle cx="8" cy="8" r="8" fill="#1c74dc"/><circle cx="8" cy="8" r="6" fill="#0f5fc4"/><path d="M5 9l2 2 4-4" fill="none" stroke="#2f93ff" stroke-width="1.500"/></svg></button></div>
      <div class="set roomy"><button aria-label="Aislar objetos"><svg class="ic" viewBox="0 0 16 16"><path d="M1 1h6v6H1zM3 15l4-6 4 6z" fill="none" stroke="#ddd"/><circle cx="12" cy="7.500" r="3" fill="none" stroke="#ddd"/></svg></button></div>
      <div class="set"><button aria-label="Limpiar pantalla"><svg class="ic" viewBox="0 0 16 16"><path d="M.5 2.500h15v11H.5z" fill="none" stroke="#ddd"/><path d="M3 8v3.500h3.500zM13 8V4.500H9.500z" fill="#ddd"/><path d="M4 10.500l3-2.500M12 5.500L9 8" stroke="#ddd"/></svg></button><button aria-label="Personalización"><svg class="ic" viewBox="0 0 16 16"><path d="M0 3h16M0 8h16M0 13h16" stroke="#ddd" stroke-width="1.600"/></svg></button></div>
    </div>
  </footer>
</div>
</body>
</html>
```
FILE: styles.css
```css
* { box-sizing: border-box; }
body {
  margin: 0;
  background: #383838;
  color: #eee;
  font: 12px/16px "Open Sans", "Noto Sans", sans-serif;
}
button, input, select { font: inherit; color: inherit; background: none; border: 0; padding: 0; margin: 0; }
button { display: flex; align-items: center; justify-content: center; white-space: nowrap; }
svg { display: block; flex: none; overflow: visible; }
.defs { position: absolute; width: 0; height: 0; }
.ic { width: 16px; height: 16px; }
.caret { width: 8px; height: 5px; }
.caret.tiny { width: 5px; height: 3px; }
.caret.dark { color: #222; }
.caret.turn { transform: rotate(180deg); }
.app { display: flex; flex-direction: column; min-height: 100vh; }

/* header */
.top { display: grid; grid-template: 24px 20px / 41px 1fr; background: #535353; border-bottom: 1px solid #3a3a3a; }
.logo { grid-row: 1 / 3; align-self: start; height: 41px; border: 1px solid #111; background: linear-gradient(#d2d2d2, #8c8c8c 60%, #aaa); gap: 2px; }
.logo-mark { width: 26px; height: 26px; }
.titlebar { display: flex; background: #fff; }
.quick, .info { display: flex; align-items: center; background: linear-gradient(#8d8d8d, #565656); }
.quick { padding: 0 2px 0 4px; }
.quick button, .info button { width: 24px; height: 24px; }
.quick .drop, .info .drop { width: 12px; }
.quick .last { width: 16px; }
.bar-caret { width: 10px; height: 8px; }
.flip { transform: scaleX(-1); }
.dim { opacity: .45; }
.title { flex: 1; display: flex; justify-content: center; align-items: center; gap: 12px; margin: 0; font-size: 12px; font-weight: 400; color: #222; white-space: nowrap; }
.info .info-toggle { width: 13px; }
.play { width: 5px; height: 8px; }
.search { width: 180px; height: 22px; padding: 0 2px; background: #6d6d6d; border: 1px solid #3a3a3a; }
.search::placeholder { color: #bdbdbd; font-size: 11px; font-style: italic; opacity: 1; }
.info .signin { width: auto; padding: 0 6px 0 4px; gap: 5px; }
.signin .caret { margin-left: 8px; }
.info .help { margin-left: 8px; border-left: 1px solid #777; width: 26px; }
.window { display: flex; padding-left: 23px; }
.window button { width: 46px; }
.win { width: 12px; height: 12px; fill: none; stroke: #777; }
.menu { display: flex; padding: 2px 0 0 4px; color: #c9c9c9; }
.menu button { padding: 0 9px 0 8px; }
.menu .on { background: linear-gradient(#7d7d7d, #5e5e5e); border: 1px solid #888; border-bottom: 0; color: #f2f2f2; margin-right: 2px; padding: 0 9px; }
.menu .minim { gap: 6px; padding-left: 16px; }
.pill { width: 13px; height: 8px; }

/* ribbon */
.ribbon {
  display: grid;
  grid-template-columns: 244px 189px 91px 286px 87px 234px 69px 83px 82px 62px;
  background: linear-gradient(90deg, #5b5b5b 1427px, #3c3c3c);
  border-bottom: 1px solid #8c8c8c;
}
.panel { display: flex; flex-direction: column; background: #5b5b5b; border-right: 1px solid #444; box-shadow: inset 1px 0 #6a6a6a; }
.body { display: flex; flex: 1; min-height: 77px; padding-top: 4px; }
.name { display: flex; height: 21px; background: linear-gradient(#4b4b4b, #5a5a5a); padding: 0 4px; }
.name span { flex: 1; display: flex; align-items: center; justify-content: center; gap: 6px; }
.launch { width: 8px; height: 8px; }
.big { flex-direction: column; justify-content: flex-start; padding-top: 2px; line-height: 16px; text-align: center; }
.bi { width: 32px; height: 32px; margin-bottom: 3px; }
.big .caret { margin-top: 2px; }
.w42 { width: 42px; }
.w45 { width: 45px; }
.w48 { width: 48px; }
.w54 { width: 54px; }
.w56 { width: 56px; }
.w66 { width: 66px; }
.w73 { width: 73px; }
.w75 { width: 75px; }
.grow { flex: 1; }
.tools, .layers, .props { display: flex; flex-direction: column; }
.gap-s { margin-left: 4px; }
.gap-m { margin-left: 8px; }
.tool { display: flex; align-items: center; height: 24px; }
.tool button { width: 22px; height: 22px; }
.tool .drop { width: 12px; }
.tool.wide button { width: 24px; }
.named { width: 85px; margin-left: 3px; }
.named button { height: 24px; justify-content: flex-start; padding-left: 3px; gap: 6px; box-sizing: content-box; }
.tool .pressed { background: #4a72b0; border: 1px solid #2b4673; }
.layers { flex: 1; padding-right: 3px; }
.props { flex: 1; padding-right: 3px; }
.combo { display: flex; flex: 1; align-items: center; height: 22px; border: 1px solid #333; background: linear-gradient(#555, #666); padding: 0 1px 0 3px; gap: 4px; }
.combo select { flex: 1; min-width: 0; appearance: none; }
.chip { width: 16px; height: 16px; background: #fff; margin: 0 6px 0 8px; }
.chip.small { width: 14px; height: 14px; border: 1px solid #222; margin: 0; }
.rule { width: 59px; height: 1px; background: #eee; margin: 0 -3px 0 5px; }
.wheel { width: 15px; height: 15px; border-radius: 50%; background: radial-gradient(circle, #fff8 10%, #fff0 60%), conic-gradient(#e05a3a, #d63a7a, #4a50d0, #3aa0d8, #45b84a, #d8d43a, #e05a3a); }

/* file tabs */
.files { display: flex; align-items: flex-end; height: 29px; padding-left: 18px; border-bottom: 3px solid #5a5a5f; background: #383838; }
.file { width: 128px; height: 22px; justify-content: flex-start; padding-left: 14px; color: #a3a3a3; background: linear-gradient(#626262, #4a4a4a); clip-path: polygon(0 100%, 4px 60%, 9px 8%, 13px 0, calc(100% - 9px) 0, calc(100% - 5px) 8%, calc(100% - 3px) 60%, 100% 100%); }
.file.on { color: #f0f0f0; padding: 0 13px 0 9px; justify-content: space-between; background: linear-gradient(#868686, #5a5a5f); width: 122px; }
.x { width: 8px; height: 8px; }
.plus { width: 22px; height: 14px; margin: 0 0 3px 7px; background: #555; border-radius: 6px 6px 0 0; }
.plus svg, .add svg { width: 8px; height: 8px; }

/* drawing area */
.canvas {
  position: relative;
  flex: 1;
  min-height: 480px;
  background:
    linear-gradient(90deg, #333d49 1px, transparent 1px) 71px 0 / 168px 168px,
    linear-gradient(#333d49 1px, transparent 1px) 0 100px / 168px 168px,
    #222831;
}
.drawing { position: absolute; inset: 0; width: 100%; height: 100%; }
.view-row { position: relative; display: flex; justify-content: space-between; align-items: center; padding: 6px 4px 0 3px; }
.view-label, .doc-controls { display: flex; }
.view-label { font-size: 11px; }
.doc-controls button { width: 20px; height: 16px; }
.doc-controls svg { width: 10px; height: 10px; }
.viewcube { position: absolute; top: 37px; right: 13px; display: flex; flex-direction: column; align-items: center; gap: 19px; }
.ring { display: grid; grid-template: 22px 82px 20px / 20px 84px 20px; place-items: center; background: radial-gradient(circle, transparent 42px, #484e57 43px, #484e57 55px, transparent 56px); color: #bfc2c6; font: 700 17px/20px "Noto Sans", sans-serif; }
.n, .s { grid-column: 2; }
.s { grid-row: 3; }
.w { grid-column: 1; grid-row: 2; }
.e { grid-column: 3; grid-row: 2; }
.cube { grid-column: 2; grid-row: 2; width: 48px; height: 48px; color: #3c4048; font: 700 10px/16px "Liberation Sans Narrow", "Roboto Condensed", "Liberation Sans", sans-serif; background: linear-gradient(#abadb8, #abadb8) center / 30px 30px no-repeat, #b9babc; }
.scu { width: 46px; height: 17px; gap: 8px; border-radius: 4px; border: 1px solid #b5b8c2; background: #9599a4; color: #5a5e68; font-size: 11px; }
.scu svg { width: 8px; height: 4px; }
.navbar { position: absolute; top: 224px; right: 2px; border-radius: 4px; box-shadow: inset 0 0 0 1px #6e7279; background: #5b6067; }
.navbar svg { width: 32px; height: 211px; }
.ucs { position: absolute; left: 10px; bottom: 8px; width: 90px; height: 80px; }
.command { position: absolute; left: 338px; right: 337px; bottom: 0; font: 12px/15px "DejaVu Sans Mono", monospace; }
.command p { width: max-content; margin: 0 0 5px 60px; padding: 0 2px; border-radius: 2px; background: #5c5e61; color: #f2f2f2; }
.command .old { color: #c4c4c4; background: #54575b; }
.command p + p { margin-bottom: 3px; }
.cmd { display: flex; align-items: stretch; height: 26px; border-bottom: 1px solid #777; background: #bcbcc0; border-radius: 3px 0 0 0; color: #333; }
.cmd-tools { display: flex; align-items: center; width: 54px; background: linear-gradient(#777, #484848); border-radius: 3px 0 0 0; }
.grip { width: 6px; height: 16px; margin-left: 3px; background: radial-gradient(circle, #ccc 1px, transparent 1px) 0 0 / 3px 3px; }
.cmd-tools button { width: 22px; height: 22px; }
.cmd-tools svg { width: 10px; height: 10px; }
.cmd-tools .wrench { width: 14px; height: 14px; }
.prompt { gap: 4px; padding: 0 6px; color: #666; }
.term { width: 14px; height: 12px; }
.cmd input { flex: 1; min-width: 0; }
.cmd input::placeholder { color: #6c6c70; font-style: italic; opacity: 1; }
.up { width: 16px; color: #222; }
.up .caret { width: 6px; height: 4px; }

/* bottom bar */
.bottom { display: flex; justify-content: space-between; align-items: flex-start; min-height: 29px; border-top: 1px solid #666; background: #383838; }
.layouts { display: flex; padding-left: 13px; }
.layouts button { height: 17px; padding: 0 10px; background: linear-gradient(#4a4a4a, #5a5a5a); color: #a8a8a8; clip-path: polygon(0 0, 100% 0, calc(100% - 7px) 100%, 7px 100%); }
.layouts .on { background: linear-gradient(#666, #888); color: #fff; font-weight: 700; }
.layouts .add { width: 24px; padding: 0; }
.status { display: flex; gap: 1px; height: 26px; background: #4b4b4b; }
.set { display: flex; align-items: center; justify-content: center; border: 1px solid #777; }
.set button { width: 24px; height: 24px; }
.set .drop { width: 14px; }
.set .mode { width: auto; padding: 0 3px; }
.set .ratio { width: auto; gap: 4px; padding: 0 3px; }
.set.roomy { padding: 0 2px; }
.set .caret { width: 7px; height: 5px; }
```
